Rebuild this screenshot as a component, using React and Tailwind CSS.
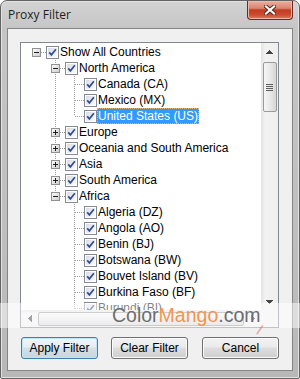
import React from 'react';

const ROWS = [
  { label: 'Show All Countries', cols: ['root'], btn: 'minus' },
  { label: 'North America', cols: ['none', 'tee'], btn: 'minus' },
  { label: 'Canada (CA)', cols: ['none', 'pipe', 'tee'] },
  { label: 'Mexico (MX)', cols: ['none', 'pipe', 'tee'] },
  { label: 'United States (US)', cols: ['none', 'pipe', 'elbow'], selected: true },
  { label: 'Europe', cols: ['none', 'tee'], btn: 'plus' },
  { label: 'Oceania and South America', cols: ['none', 'tee'], btn: 'plus' },
  { label: 'Asia', cols: ['none', 'tee'], btn: 'plus' },
  { label: 'South America', cols: ['none', 'tee'], btn: 'plus' },
  { label: 'Africa', cols: ['none', 'elbow'], btn: 'minus' },
  { label: 'Algeria (DZ)', cols: ['none', 'none', 'tee'] },
  { label: 'Angola (AO)', cols: ['none', 'none', 'tee'] },
  { label: 'Benin (BJ)', cols: ['none', 'none', 'tee'] },
  { label: 'Botswana (BW)', cols: ['none', 'none', 'tee'] },
  { label: 'Bouvet Island (BV)', cols: ['none', 'none', 'tee'] },
  { label: 'Burkina Faso (BF)', cols: ['none', 'none', 'tee'] },
  { label: 'Burundi (BI)', cols: ['none', 'none', 'tee'] },
];

const DOT = { stroke: '#a0a0a0', strokeDasharray: '1 1', shapeRendering: 'crispEdges' };

function LineCell({ kind, btn }) {
  return (
    <svg width="19" height="16" className="block shrink-0">
      {(kind === 'tee' || kind === 'pipe') && <line x1="9.5" y1="0" x2="9.5" y2="16" {...DOT} />}
      {kind === 'elbow' && <line x1="9.5" y1="0" x2="9.5" y2="8" {...DOT} />}
      {(kind === 'tee' || kind === 'elbow' || kind === 'root') && (
        <line x1="10" y1="8.5" x2="19" y2="8.5" {...DOT} />
      )}
      {btn && (
        <g shapeRendering="crispEdges">
          <defs>
            <linearGradient id="tb" x1="0" y1="0" x2="1" y2="1">
              <stop offset="0" stopColor="#ffffff" />
              <stop offset="1" stopColor="#c9c9c9" />
            </linearGradient>
          </defs>
          <rect x="5.5" y="4.5" width="8" height="8" fill="url(#tb)" stroke="#919191" />
          <rect x="7" y="8" width="5" height="1" fill="#1c1c1c" />
          {btn === 'plus' && <rect x="9" y="6" width="1" height="5" fill="#1c1c1c" />}
        </g>
      )}
    </svg>
  );
}

function CheckBox() {
  return (
    <svg width="13" height="13" className="block shrink-0 mt-[2px]">
      <defs>
        <linearGradient id="cb" x1="0" y1="0" x2="1" y2="1">
          <stop offset="0" stopColor="#dadde3" />
          <stop offset="1" stopColor="#fbfbfb" />
        </linearGradient>
      </defs>
      <rect x="0.5" y="0.5" width="12" height="12" fill="#fff" stroke="#848a96" shapeRendering="crispEdges" />
      <rect x="2" y="2" width="9" height="9" fill="url(#cb)" />
      <path d="M3.2 6.4 L5.4 8.9 L9.9 3.2" fill="none" stroke="#2f4e92" strokeWidth="1.7" />
    </svg>
  );
}

function Arrow({ dir }) {
  const paths = {
    up: 'M3 0h1v1h-1z M2 1h3v1h-3z M1 2h5v1h-5z M0 3h7v1h-7z',
    down: 'M0 0h7v1h-7z M1 1h5v1h-5z M2 2h3v1h-3z M3 3h1v1h-1z',
    left: 'M3 0h1v7h-1z M2 1h1v5h-1z M1 2h1v3h-1z M0 3h1v1h-1z',
    right: 'M0 0h1v7h-1z M1 1h1v5h-1z M2 2h1v3h-1z M3 3h1v1h-1z',
  };
  const vertical = dir === 'up' || dir === 'down';
  return (
    <svg width={vertical ? 7 : 4} height={vertical ? 4 : 7} className="block">
      <path d={paths[dir]} fill="#444" shapeRendering="crispEdges" />
    </svg>
  );
}

function TreeRow({ row }) {
  return (
    <div className="flex h-[16px]">
      {row.cols.map((c, i) => (
        <LineCell key={i} kind={c} btn={i === row.cols.length - 1 ? row.btn : null} />
      ))}
      <CheckBox />
      <span
        className={
          row.selected
            ? 'px-[1px] h-[16px] leading-[16px] whitespace-nowrap bg-[#3399ff] text-white outline-1 outline-dotted -outline-offset-1 outline-[#d9b27c]'
            : 'px-[1px] h-[16px] leading-[16px] whitespace-nowrap text-black'
        }
      >
        {row.label}
      </span>
    </div>
  );
}

function WinButton({ children, focused }) {
  return (
    <div
      className={
        focused
          ? 'w-[77px] h-[22px] rounded-[3px] border border-[#3c7fb1] shadow-[inset_0_0_0_1px_#bfe6f8] bg-[linear-gradient(to_bottom,#f1f6f9,#e5eef4_45%,#d3e0e9_50%,#c8d6e0)] flex items-center justify-center'
          : 'w-[77px] h-[22px] rounded-[3px] border border-[#707070] shadow-[inset_0_0_0_1px_#fbfbfb] bg-[linear-gradient(to_bottom,#f2f2f2,#ebebeb_45%,#dddddd_50%,#cfcfcf)] flex items-center justify-center'
      }
    >
      <span className="text-[12px] leading-[14px] text-black">{children}</span>
    </div>
  );
}

export default function App() {
  return (
    <div className="w-[300px] h-[379px] relative overflow-hidden font-['Liberation_Sans',Arial,sans-serif] text-[12px]">
      <div className="w-full h-full flex flex-col border border-[#636363] rounded-t-[7px] rounded-b-[2px] bg-[linear-gradient(to_bottom,#d3d3d3,#c5c5c5_28px,#bfbfbf_60%,#b8b8b8)] shadow-[inset_0_0_0_1px_#e2e2e2]">
        {/* title bar */}
        <div className="h-[27px] shrink-0 flex items-start">
          <span className="ml-[7px] mt-[6px] font-['Open_Sans',sans-serif] text-[12px] leading-[16px] text-[#1e1e1e]">
            Proxy Filter
          </span>
          <div className="ml-auto mr-[6px] w-[46px] h-[19px] rounded-b-[4px] border border-t-0 border-[#6b2a20] bg-[linear-gradient(to_bottom,#eab0a2,#d98571_40%,#c13c22_50%,#cc4a2f_75%,#e0755a)] shadow-[inset_0_0_0_1px_#f0b8a8] flex items-center justify-center">
            <svg width="12" height="10" className="block">
              <path d="M2 1.5 L10 8.5 M10 1.5 L2 8.5" stroke="#5b2118" strokeWidth="4" strokeLinecap="square" />
              <path d="M2 1.5 L10 8.5 M10 1.5 L2 8.5" stroke="#ffffff" strokeWidth="2.2" strokeLinecap="square" />
            </svg>
          </div>
        </div>

        {/* client area */}
        <div className="mx-[6px] h-[343px] shrink-0 border border-[#858585] bg-[#f0f0f0] flex flex-col">
          <div className="ml-[12px] mt-[13px] w-[259px] h-[286px] border border-[#828790] bg-white grid grid-cols-[240px_17px] grid-rows-[267px_17px]">
            <div className="overflow-hidden pt-[1px] pl-[6px]">
              {ROWS.map((r) => (
                <TreeRow key={r.label} row={r} />
              ))}
            </div>

            {/* vertical scrollbar */}
            <div className="bg-[linear-gradient(to_right,#e4e4e4,#f2f2f2_25%,#efefef)] flex flex-col items-center">
              <div className="h-[17px] w-full flex items-center justify-center">
                <Arrow dir="up" />
              </div>
              <div className="mt-[2px] w-[14px] h-[50px] rounded-[2px] border border-[#9a9a9a] bg-[linear-gradient(to_right,#f6f6f6,#e8e8e8_50%,#d6d6d6)] flex flex-col items-center justify-center gap-[1px]">
                <div className="w-[7px] h-[1px] bg-[#5e5e5e]" />
                <div className="w-[7px] h-[1px] bg-[#5e5e5e]" />
                <div className="w-[7px] h-[1px] bg-[#5e5e5e]" />
                <div className="w-[7px] h-[1px] bg-[#5e5e5e]" />
              </div>
              <div className="flex-1" />
              <div className="h-[17px] w-full flex items-center justify-center">
                <Arrow dir="down" />
              </div>
            </div>

            {/* horizontal scrollbar */}
            <div className="bg-[linear-gradient(to_bottom,#e4e4e4,#f2f2f2_25%,#efefef)] flex items-center">
              <div className="w-[17px] h-full flex items-center justify-center">
                <Arrow dir="left" />
              </div>
              <div className="flex-1 h-[14px] rounded-[2px] border border-[#9a9a9a] bg-[linear-gradient(to_bottom,#f6f6f6,#e8e8e8_50%,#d6d6d6)]" />
              <div className="w-[17px] h-full flex items-center justify-center">
                <Arrow dir="right" />
              </div>
            </div>
            <div className="bg-[#f0f0f0]" />
          </div>

          <div className="flex mt-[9px] ml-[13px] gap-[13px]">
            <WinButton focused>Apply Filter</WinButton>
            <WinButton>Clear Filter</WinButton>
            <div className="ml-[1px]">
              <WinButton>Cancel</WinButton>
            </div>
          </div>
        </div>
      </div>

      {/* watermark band */}
      <div className="absolute left-0 right-0 top-[303px] h-[25px] bg-white/50 flex items-center">
        <span className="ml-[112px] text-[19.5px] leading-[25px] font-['Liberation_Sans',Arial,sans-serif]">
          <span className="text-[#6e6e6e]">Color</span>
          <span className="text-[#f39550]">Mango</span>
          <span className="text-[#6e6e6e]">.com</span>
        </span>
      </div>
      <svg width="10" height="12" className="absolute left-[254px] top-[323px] opacity-40">
        <path d="M2 11 L8 2 L9.5 3 L3.5 11.5 Z" fill="#d84a3a" />
      </svg>
    </div>
  );
}
